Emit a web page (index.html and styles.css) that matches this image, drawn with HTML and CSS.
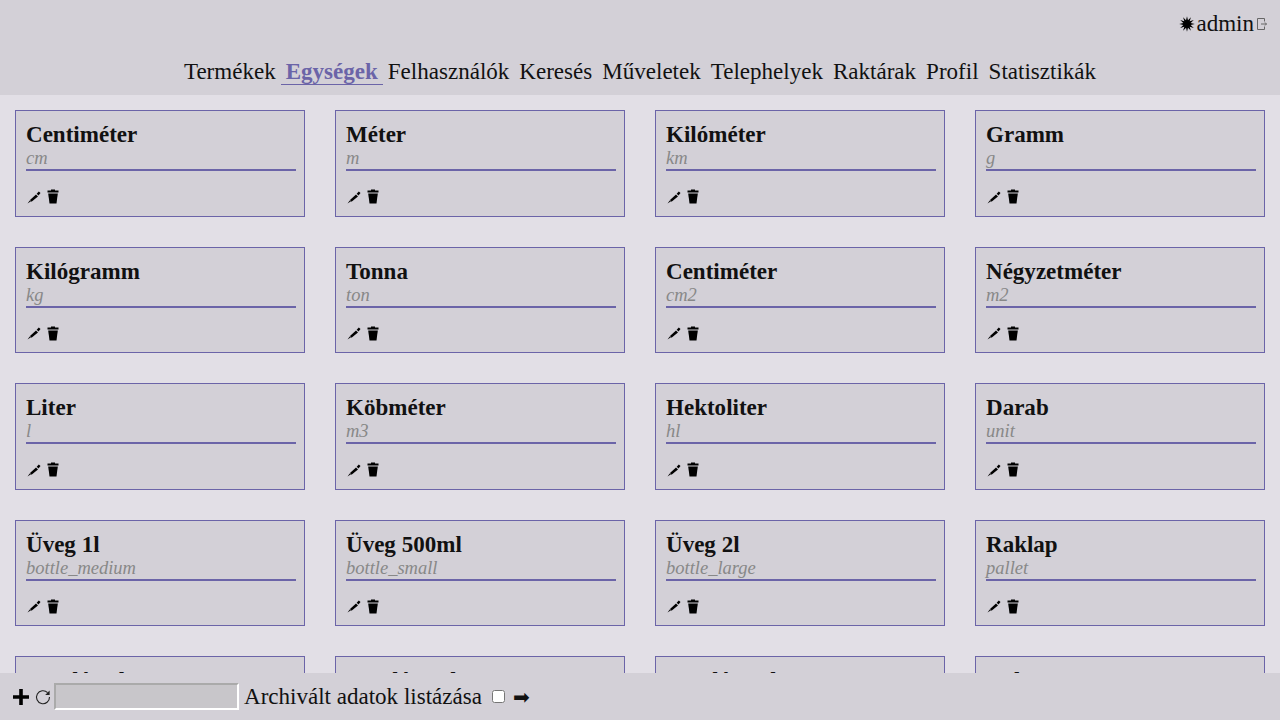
FILE: index.html
```html
<!DOCTYPE html>
<html lang="hu">
<head>
<meta charset="utf-8">
<title>Egységek</title>
<link rel="stylesheet" href="styles.css">
</head>
<body>
<svg class="defs" width="0" height="0">
  <symbol id="pen" viewBox="0 0 14 14"><path d="M0.500 13.500L3 10.300 4 11.300Z" fill="#000"/><path d="M3 10L9 4.500 11 6.500 4.500 11.800Z" fill="#000"/><path d="M9.700 3.800L11.800 1.500 13.500 3 11.500 5.500Z" fill="#000"/></symbol>
  <symbol id="bin" viewBox="0 0 12 15"><path d="M4 1.500V0.500H8V1.500H11.500V3.500H0.500V1.500Z" fill="#000"/><path d="M1.200 4.500H10.800L9.500 14.500H2.500Z" fill="#000"/></symbol>
</svg>
<header class="top">
  <div class="user"><svg class="sun" width="16" height="16" viewBox="0 0 16 16"><polygon fill="#000" points="15.800,8 11.670,8.980 14.750,11.900 10.690,10.690 11.900,14.750 8.980,11.670 8,15.800 7.020,11.670 4.100,14.750 5.310,10.690 1.250,11.900 4.330,8.980 0.200,8 4.330,7.020 1.250,4.100 5.310,5.310 4.100,1.250 7.020,4.330 8,0.200 8.980,4.330 11.900,1.250 10.690,5.310 14.750,4.100 11.670,7.020"/></svg><span>admin</span><svg class="logout" width="11" height="14" viewBox="0 0 11 14"><path d="M8.500 4.500V1.500H1.500V12.500H8.500V9.500M5 7H10.500M9 5.500L10.500 7 9 8.500" fill="none" stroke="#666" stroke-width="1"/></svg></div>
  <nav class="nav">
    <a>Termékek</a><a class="active">Egységek</a><a>Felhasználók</a><a>Keresés</a><a>Műveletek</a><a>Telephelyek</a><a>Raktárak</a><a>Profil</a><a>Statisztikák</a>
  </nav>
</header>
<main class="grid">
  <article class="card"><h2>Centiméter</h2><p>cm</p><div class="acts"><svg class="pen"><use href="#pen"/></svg><svg class="bin"><use href="#bin"/></svg></div></article>
  <article class="card"><h2>Méter</h2><p>m</p><div class="acts"><svg class="pen"><use href="#pen"/></svg><svg class="bin"><use href="#bin"/></svg></div></article>
  <article class="card"><h2>Kilóméter</h2><p>km</p><div class="acts"><svg class="pen"><use href="#pen"/></svg><svg class="bin"><use href="#bin"/></svg></div></article>
  <article class="card"><h2>Gramm</h2><p>g</p><div class="acts"><svg class="pen"><use href="#pen"/></svg><svg class="bin"><use href="#bin"/></svg></div></article>
  <article class="card"><h2>Kilógramm</h2><p>kg</p><div class="acts"><svg class="pen"><use href="#pen"/></svg><svg class="bin"><use href="#bin"/></svg></div></article>
  <article class="card"><h2>Tonna</h2><p>ton</p><div class="acts"><svg class="pen"><use href="#pen"/></svg><svg class="bin"><use href="#bin"/></svg></div></article>
  <article class="card"><h2>Centiméter</h2><p>cm2</p><div class="acts"><svg class="pen"><use href="#pen"/></svg><svg class="bin"><use href="#bin"/></svg></div></article>
  <article class="card"><h2>Négyzetméter</h2><p>m2</p><div class="acts"><svg class="pen"><use href="#pen"/></svg><svg class="bin"><use href="#bin"/></svg></div></article>
  <article class="card"><h2>Liter</h2><p>l</p><div class="acts"><svg class="pen"><use href="#pen"/></svg><svg class="bin"><use href="#bin"/></svg></div></article>
  <article class="card"><h2>Köbméter</h2><p>m3</p><div class="acts"><svg class="pen"><use href="#pen"/></svg><svg class="bin"><use href="#bin"/></svg></div></article>
  <article class="card"><h2>Hektoliter</h2><p>hl</p><div class="acts"><svg class="pen"><use href="#pen"/></svg><svg class="bin"><use href="#bin"/></svg></div></article>
  <article class="card"><h2>Darab</h2><p>unit</p><div class="acts"><svg class="pen"><use href="#pen"/></svg><svg class="bin"><use href="#bin"/></svg></div></article>
  <article class="card"><h2>Üveg 1l</h2><p>bottle_medium</p><div class="acts"><svg class="pen"><use href="#pen"/></svg><svg class="bin"><use href="#bin"/></svg></div></article>
  <article class="card"><h2>Üveg 500ml</h2><p>bottle_small</p><div class="acts"><svg class="pen"><use href="#pen"/></svg><svg class="bin"><use href="#bin"/></svg></div></article>
  <article class="card"><h2>Üveg 2l</h2><p>bottle_large</p><div class="acts"><svg class="pen"><use href="#pen"/></svg><svg class="bin"><use href="#bin"/></svg></div></article>
  <article class="card"><h2>Raklap</h2><p>pallet</p><div class="acts"><svg class="pen"><use href="#pen"/></svg><svg class="bin"><use href="#bin"/></svg></div></article>
  <article class="card"><h2>Hordó 50l</h2></article>
  <article class="card"><h2>Hordó 100l</h2></article>
  <article class="card"><h2>Hordó 200l</h2></article>
  <article class="card"><h2>Doboz</h2></article>
</main>
<footer class="bottom">
  <svg class="plus" width="16" height="16" viewBox="0 0 16 16"><path d="M6.200 0H9.800V6.200H16V9.800H9.800V16H6.200V9.800H0V6.200H6.200Z" fill="#000"/></svg>
  <svg class="reload" width="16" height="16" viewBox="0 0 16 16"><path d="M12.600 3.600A6.500 6.500 0 1 0 14.500 8" fill="none" stroke="#222" stroke-width="1.100"/><path d="M14.600 1.500V6H10.200Z" fill="#222"/></svg>
  <input class="search" type="text"><label class="arch">Archivált adatok listázása</label><input class="chk" type="checkbox"><span class="next">➡</span>
</footer>
</body>
</html>
```
FILE: styles.css
```css
html, body { margin: 0; padding: 0; height: 720px; overflow: hidden; }
body { background: #e2dfe6; font-family: "Liberation Serif", serif; color: #111; }
.defs { display: block; }
.top { background: #d3d0d7; height: 95px; display: flex; flex-direction: column; }
.user { display: flex; justify-content: flex-end; align-items: center; height: 47px; font-size: 23.040px; padding-right: 13px; }
.sun { margin-right: 1px; }
.logout { margin-left: 2px; }
.nav { display: flex; justify-content: center; font-size: 23.040px; margin-top: 11px; }
.nav a { padding: 0 5px; }
.nav .active { color: #6b64a8; font-weight: bold; border-bottom: 1px solid #6b64a8; height: 26px; }
.grid { display: grid; grid-template-columns: repeat(4, 1fr); grid-auto-rows: 136.500px; height: 578px; overflow: hidden; }
.card { margin: 15px; border: 1px solid #6b64a8; background: #d3d0d7; padding: 10px 8px 10px 10px; height: 106.500px; box-sizing: border-box; }
.card h2 { margin: 0; font-size: 23.040px; line-height: 27px; }
.card p { margin: 0; font-size: 18.500px; font-style: italic; color: #888; border-bottom: 2px solid #6b64a8; line-height: 20px; height: 21px; }
.acts { margin-top: 18px; display: flex; align-items: center; gap: 6px; padding-left: 1px; }
.pen { width: 14px; height: 14px; }
.bin { width: 12px; height: 15px; }
.bottom { position: fixed; left: 0; right: 0; bottom: 0; height: 47px; background: #d3d0d7; display: flex; align-items: center; padding-left: 13px; font-size: 23.040px; }
.reload { margin-left: 6px; }
.search { width: 185px; height: 27px; box-sizing: border-box; margin-left: 3px; background: #c8c6ca; border-width: 2px; border-style: solid; border-color: #aaa #fff #fff #aaa; }
.arch { margin-left: 5px; }
.chk { margin: 0 8px 0 10px; width: 13px; height: 13px; }
.next { font-size: 20px; }
```
